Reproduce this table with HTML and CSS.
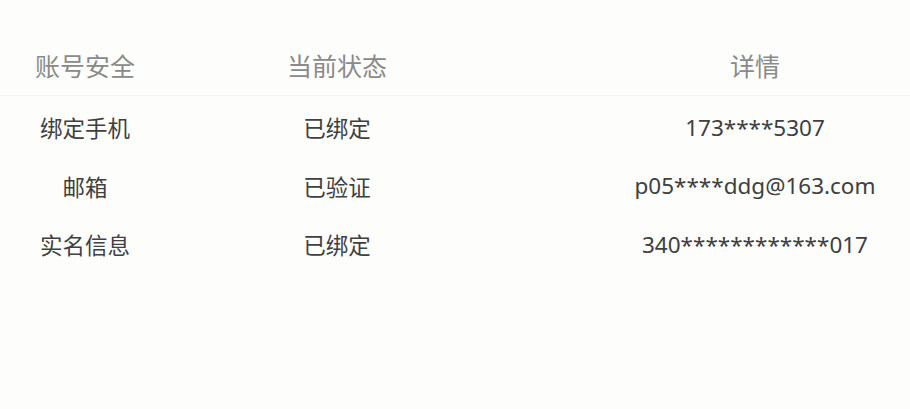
FILE: index.html
```html
<!DOCTYPE html>
<html lang="zh">
<head>
<meta charset="utf-8">
<link rel="stylesheet" href="styles.css">
</head>
<body>
<div class="table">
  <div class="row head">
    <div class="c1">账号安全</div>
    <div class="c2">当前状态</div>
    <div class="c3">详情</div>
  </div>
  <div class="body">
    <div class="row">
      <div class="c1">绑定手机</div>
      <div class="c2">已绑定</div>
      <div class="c3 num">173****5307</div>
    </div>
    <div class="row">
      <div class="c1">邮箱</div>
      <div class="c2">已验证</div>
      <div class="c3 num">p05****ddg@163.com</div>
    </div>
    <div class="row">
      <div class="c1">实名信息</div>
      <div class="c2">已绑定</div>
      <div class="c3 num">340************017</div>
    </div>
  </div>
</div>
</body>
</html>
```
FILE: styles.css
```css
html, body {
  margin: 0;
  padding: 0;
  background: #fdfdfb;
}
body {
  width: 910px;
  height: 409px;
  overflow: hidden;
  font-family: "Noto Sans CJK SC", "Noto Sans", sans-serif;
}
.table {
  display: flex;
  flex-direction: column;
}
.row {
  display: grid;
  grid-template-columns: 170px 334px 1fr;
  align-items: center;
  text-align: center;
}
.c3 {
  padding-left: 96px;
}
.head {
  height: 96px;
  box-sizing: border-box;
  padding-top: 34px;
  border-bottom: 1px solid #f3f3f1;
  color: #8a8a8a;
  font-size: 25px;
}
.body {
  display: flex;
  flex-direction: column;
  padding-top: 2px;
}
.body .row {
  height: 58.5px;
  color: #404040;
  font-size: 22.5px;
}
.num {
  font-family: "Noto Sans", sans-serif;
  font-size: 22.5px;
}
```
